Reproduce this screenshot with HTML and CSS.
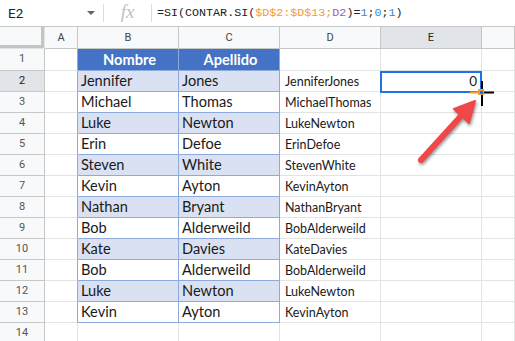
FILE: index.html
```html
<!DOCTYPE html>
<html lang="es">
<head>
    <meta charset="UTF-8">
    <title>CONTAR.SI</title>
    <link rel="stylesheet" href="styles.css">
</head>
<body>
    <div class="fbar">
        <div class="namebox">E2<span class="drop"></span></div>
        <div class="fx">fx</div>
        <div class="formula">=SI(CONTAR.SI(<span class="rng">$D$2:$D$13;</span><span class="ref">D2</span>)=<span class="num">1</span>;<span class="num">0</span>;<span class="num">1</span>)</div>
    </div>

    <div class="sheet">
        <div class="grid">
            <div class="corner"></div>
            <div class="colh">A</div>
            <div class="colh">B</div>
            <div class="colh">C</div>
            <div class="colh">D</div>
            <div class="colh sel">E</div>
            <div class="colh"></div>

            <div class="rowh">1</div>
            <div class="c ca"></div>
            <div class="c t th">Nombre</div>
            <div class="c t th">Apellido</div>
            <div class="c"></div>
            <div class="c"></div>
            <div class="c"></div>
        </div>
        <div class="grid" id="rows"></div>

        <div class="selbox"></div>
        <svg class="cursor" width="30" height="30" viewBox="0 0 30 30">
            <rect x="8" y="8" width="6" height="6" fill="#f29b38"/>
            <rect x="10" y="10" width="3" height="3" fill="#1a73e8"/>
            <line x1="0" y1="11.5" x2="8" y2="11.5" stroke="#f29b38" stroke-width="2"/>
            <line x1="14" y1="11.5" x2="24" y2="11.5" stroke="#000" stroke-width="2"/>
            <line x1="12" y1="0" x2="12" y2="8" stroke="#000" stroke-width="2"/>
            <line x1="12" y1="14" x2="12" y2="25" stroke="#000" stroke-width="2"/>
        </svg>
        <svg class="arrow" width="80" height="80" viewBox="410 92 80 80">
            <line x1="421" y1="160" x2="462" y2="115" stroke="#f04848" stroke-width="6" stroke-linecap="round"/>
            <polygon points="475,101 469,123 454,109" fill="#f04848" stroke="#f04848" stroke-width="2" stroke-linejoin="round"/>
        </svg>
    </div>

    <script>
        var data=[["Jennifer","Jones"],["Michael","Thomas"],["Luke","Newton"],["Erin","Defoe"],
            ["Steven","White"],["Kevin","Ayton"],["Nathan","Bryant"],["Bob","Alderweild"],
            ["Kate","Davies"],["Bob","Alderweild"],["Luke","Newton"],["Kevin","Ayton"]];
        var rows=document.getElementById("rows");
        var html="";
        for(var i=0;i<data.length;i++){
            var band=i%2==0?" band":"";
            var last=i==data.length-1?" last":"";
            html+='<div class="rowh'+(i==0?' sel':'')+'">'+(i+2)+'</div>';
            html+='<div class="c ca"></div>';
            html+='<div class="c t'+band+last+'">'+data[i][0]+'</div>';
            html+='<div class="c t'+band+last+'">'+data[i][1]+'</div>';
            html+='<div class="c d">'+data[i][0]+data[i][1]+'</div>';
            html+='<div class="c e">'+(i==0?'0':'')+'</div>';
            html+='<div class="c"></div>';
        }
        html+='<div class="rowh">14</div><div class="c"></div><div class="c"></div><div class="c"></div><div class="c"></div><div class="c"></div><div class="c"></div>';
        rows.innerHTML=html;
    </script>
</body>
</html>
```

FILE: styles.css
```css
*{
    margin: 0;
    padding: 0;
    box-sizing: border-box;
}
body{
    width: 515px;
    height: 341px;
    overflow: hidden;
    background: #fff;
    font-family: Roboto, "Liberation Sans", sans-serif;
}
.fbar{
    height: 27px;
    border-bottom: 1px solid #c7c7c7;
    display: flex;
    align-items: center;
}
.namebox{
    width: 104px;
    height: 18px;
    padding-left: 8px;
    font-size: 13.5px;
    line-height: 18px;
    color: #202124;
    border-right: 1px solid #dadce0;
    position: relative;
}
.drop{
    position: absolute;
    left: 87px;
    top: 7px;
    border-left: 4px solid transparent;
    border-right: 4px solid transparent;
    border-top: 4px solid #5f6368;
}
.fx{
    width: 48px;
    height: 18px;
    border-right: 1px solid #dadce0;
    text-align: center;
    font-family: "Liberation Serif", serif;
    font-style: italic;
    font-size: 19px;
    line-height: 16px;
    color: #c0c0c0;
}
.formula{
    padding-left: 5px;
    font-family: "Liberation Mono", monospace;
    font-size: 11.7px;
    color: #202124;
}
.formula .rng{ color: #f29b38; }
.formula .ref{ color: #a35bb5; }
.formula .num{ color: #3d7fe0; }

.sheet{
    position: relative;
}
.grid{
    display: grid;
    grid-template-columns: 45px 33px 101px 101px 101px 101px 33px;
    grid-template-rows: 22px 22px;
    grid-auto-rows: 21px;
}
#rows{
    grid-template-rows: none;
}
.grid > div{
    border-right: 1px solid #e2e3e3;
    border-bottom: 1px solid #e2e3e3;
    white-space: nowrap;
    overflow: hidden;
}
.corner{
    background: #f8f9fa;
    box-shadow: inset -3px -3px 0 #c4c4c4;
}
.grid > .colh{
    background: #f8f9fa;
    border-right-color: #c7c7c7;
    border-bottom-color: #c7c7c7;
    text-align: center;
    font-size: 11px;
    line-height: 22px;
    color: #444;
}
.grid > .rowh{
    background: #f8f9fa;
    border-right-color: #c7c7c7;
    border-bottom-color: #c7c7c7;
    text-align: center;
    font-size: 11px;
    line-height: 20px;
    color: #555;
}
.grid > .sel{
    background: #e1e5ea;
    color: #222;
}
.grid > .ca{
    border-right-color: #8ea9db;
}
.c{
    font-family: Lato, "Liberation Sans", sans-serif;
    color: #1a1a1a;
}
.grid > .t{
    border-right-color: #8ea9db;
    border-bottom-color: #8ea9db;
    padding-left: 3px;
    font-size: 14.6px;
    line-height: 20px;
}
.grid > .th{
    background: #4472c4;
    color: #fff;
    font-weight: bold;
    text-align: center;
    line-height: 21px;
}
.band{
    background: #d9e1f2;
}
.d{
    padding-left: 5px;
    font-size: 12.5px;
    line-height: 22px;
}
.e{
    text-align: right;
    padding-right: 4px;
    font-size: 13.5px;
    line-height: 20px;
}
.selbox{
    position: absolute;
    left: 380px;
    top: 44px;
    width: 102px;
    height: 22px;
    border: 2px solid #1a73e8;
}
.cursor{
    position: absolute;
    left: 470px;
    top: 54px;
}
.arrow{
    position: absolute;
    left: 410px;
    top: 65px;
    filter: drop-shadow(1px 2px 1.5px rgba(0,0,0,0.4));
}
```
